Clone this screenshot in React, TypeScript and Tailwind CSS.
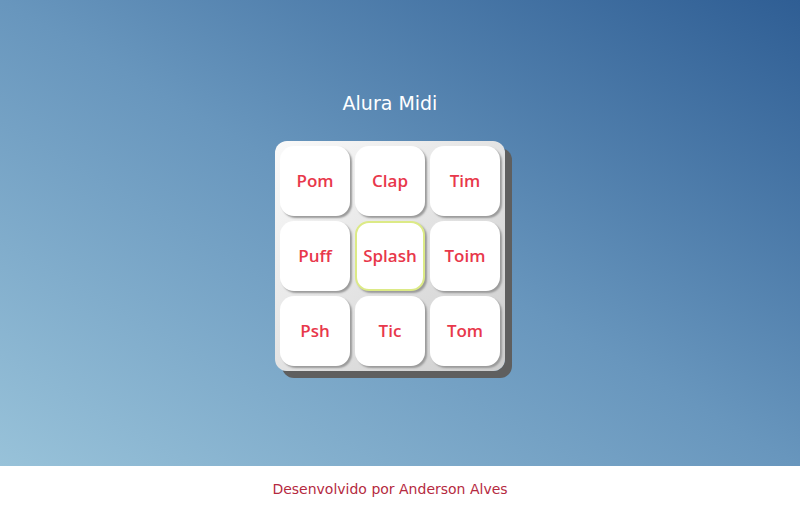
const pads = ["Pom", "Clap", "Tim", "Puff", "Splash", "Toim", "Psh", "Tic", "Tom"];

export default function App() {
  return (
    <div className="flex h-[512px] w-[800px] flex-col font-['DejaVu_Sans',sans-serif]">
      {/* Main */}
      <main className="flex h-[466px] flex-col items-center bg-gradient-to-tr from-[#98c2d9] via-[#6896bd] to-[#2f5e94] pr-[20px] pt-[91px]">
        <h1 className="text-[19px] leading-[24px] text-white">Alura Midi</h1>

        {/* Pad grid */}
        <section className="mt-[26px] grid grid-cols-[repeat(3,70px)] gap-[5px] rounded-[12px] bg-gradient-to-br from-[#fafafa] to-[#cdcdcd] p-[5px] shadow-[7px_7px_0_0_#5f5f5f]">
          {pads.map((name) => (
            <button
              key={name}
              className={`flex h-[70px] w-[70px] items-center justify-center rounded-[14px] bg-white font-['Open_Sans',sans-serif] text-[17px] font-semibold text-[#e8384b] shadow-[2px_2px_2px_0_#9a9a9a] ${
                name === "Splash" ? "border-2 border-[#dcea86] shadow-[0_0_3px_0_#e6f0a0]" : ""
              }`}
            >
              {name}
            </button>
          ))}
        </section>
      </main>

      {/* Footer */}
      <footer className="flex h-[46px] items-center justify-center bg-white pr-[20px]">
        <p className="text-[14px] text-[#b52a3f]">Desenvolvido por Anderson Alves</p>
      </footer>
    </div>
  );
}
